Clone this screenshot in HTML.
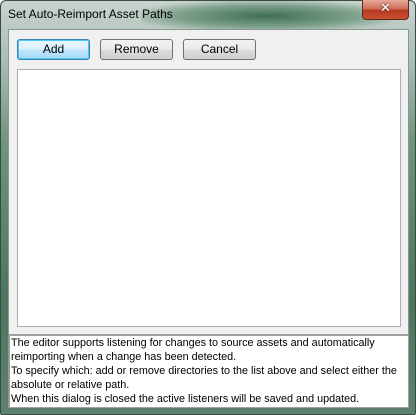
<!DOCTYPE html><html><head><style>
body{margin:0;width:416px;height:415px;overflow:hidden;font-family:Tahoma,"Liberation Sans",sans-serif;}
.frame{position:absolute;left:0;top:0;width:414px;height:413px;border:1px solid #3a4a42;border-radius:6px 6px 2px 2px;
background:linear-gradient(180deg,#c9d3ce 0px,#a9beb3 60px,#6f9480 140px,#4d7460 300px,#5f8270 415px);}
.glow{position:absolute;left:140px;top:0;width:250px;height:30px;background:radial-gradient(ellipse at center,#3f6e55 0%,rgba(80,130,100,.6) 50%,rgba(0,0,0,0) 80%);}
.title{position:absolute;left:8px;top:7px;font-size:12px;color:#000;}
.close{position:absolute;left:362px;top:0;width:45px;height:19px;border:1px solid #5a2a20;border-top:none;border-radius:0 0 4px 4px;
background:linear-gradient(180deg,#e8a898 0%,#d0705c 45%,#b83a22 55%,#c85030 100%);color:#fff;font-weight:bold;font-size:13px;text-align:center;line-height:18px;font-family:"DejaVu Sans",sans-serif;text-shadow:0 0 2px #333;}
.client{position:absolute;left:8px;top:29px;width:399px;height:377px;background:#f0f0f0;border:1px solid #8a9a92;}
.btn{position:absolute;top:9px;width:71px;height:19px;border:1px solid #707070;border-radius:3px;background:linear-gradient(180deg,#f2f2f2 0%,#ebebeb 50%,#dddddd 51%,#cfcfcf 100%);font-size:12px;text-align:center;line-height:19px;}
.list{position:absolute;left:8px;top:39px;width:382px;height:256px;background:#fff;border:1px solid #abadb3;}
.info{position:absolute;left:0;top:304px;width:397px;height:71px;background:#fff;border:1px solid #a0a0a0;border-top:2px solid #a0a0a0;font-size:10.8px;line-height:14px;padding-left:1px;white-space:nowrap;overflow:hidden;}
</style></head><body>
<div class="frame"><div class="glow"></div></div>
<div class="title">Set Auto-Reimport Asset Paths</div>
<div class="close">✕</div>
<div class="client">
<div class="btn" style="left:8px;border-color:#3c7fb1;box-shadow:inset 0 0 0 1px #48cbf6;background:linear-gradient(180deg,#eaf6fd 0%,#d9f0fc 50%,#bee6fd 51%,#a7d9f5 100%)">Add</div>
<div class="btn" style="left:91px">Remove</div>
<div class="btn" style="left:174px">Cancel</div>
<div class="list"></div>
<div class="info">The editor supports listening for changes to source assets and automatically<br>reimporting when a change has been detected.<br>To specify which: add or remove directories to the list above and select either the<br>absolute or relative path.<br>When this dialog is closed the active listeners will be saved and updated.</div>
</div>
</body></html>
